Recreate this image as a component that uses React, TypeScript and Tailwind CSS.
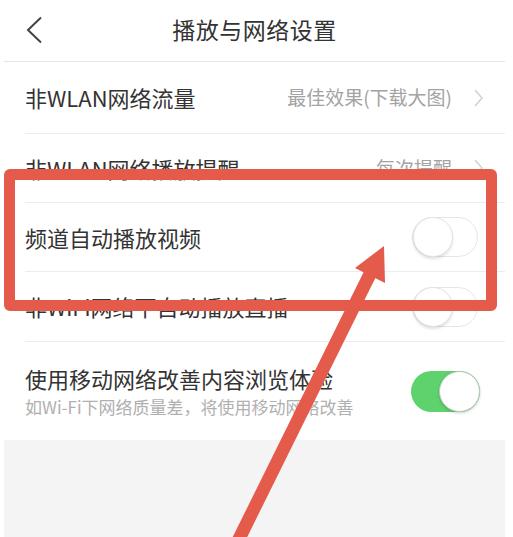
import React from "react";

const font = { fontFamily: '"Noto Sans CJK SC", "Noto Sans", sans-serif' };

function Chevron() {
  return (
    <svg width="9" height="18" viewBox="0 0 9 18" className="ml-[22px]">
      <path d="M1 1 L8 9 L1 17" fill="none" stroke="#cfcfcf" strokeWidth="1.4" />
    </svg>
  );
}

function Toggle({ on }: { on?: boolean }) {
  if (on) {
    return (
      <div className="w-[69px] h-[41px] rounded-full bg-[#5ed36d] flex items-center justify-end">
        <div className="w-[41px] h-[41px] rounded-full bg-white border border-[#b9c9bb] shadow-[0_1px_3px_rgba(0,0,0,0.2)]" />
      </div>
    );
  }
  return (
    <div className="w-[66px] h-[40px] rounded-full bg-white border border-[#e6e6e6] flex items-center">
      <div className="w-[40px] h-[40px] rounded-full bg-white border border-[#e3e3e3] shadow-[0_2px_3px_rgba(0,0,0,0.12)]" />
    </div>
  );
}

function Row({
  title,
  value,
  toggle,
  h,
}: {
  title: string;
  value?: string;
  toggle?: boolean;
  h: string;
}) {
  return (
    <div className="pl-[21px]">
      <div className={`${h} flex items-center ${toggle ? "pr-[27px]" : "pr-[22px]"} border-b border-[#ececec]`}>
        <span className="flex-1 text-[22px] text-[#333]">{title}</span>
        {value && <span className="text-[19px] text-[#a3a3a3]">{value}</span>}
        {value && <Chevron />}
        {toggle && <Toggle />}
      </div>
    </div>
  );
}

export default function App() {
  return (
    <div className="relative w-[513px] h-[537px] bg-white overflow-hidden" style={font}>
      <div className="ml-[4px] w-[501px] h-full flex flex-col">
        <div className="h-[62px] relative flex items-center justify-center border-b border-[#e5e5e5]">
          <svg width="17" height="28" viewBox="0 0 17 28" className="absolute left-[22px] top-[16px]">
            <path d="M15 1.5 L2 14 L15 26.5" fill="none" stroke="#444" strokeWidth="2" />
          </svg>
          <span className="text-[23px] text-[#333] tracking-[0.5px] -mt-[2px]">播放与网络设置</span>
        </div>
        <Row h="h-[72px]" title="非WLAN网络流量" value="最佳效果(下载大图)" />
        <Row h="h-[69px]" title="非WLAN网络播放提醒" value="每次提醒" />
        <Row h="h-[69px]" title="频道自动播放视频" toggle />
        <Row h="h-[70px]" title="非WiFi网络下自动播放直播" toggle />
        <div className="pl-[21px] pr-[25px] h-[98px] flex items-center">
          <div className="flex-1 flex flex-col">
            <span className="text-[22px] text-[#333] leading-[30px]">使用移动网络改善内容浏览体验</span>
            <span className="text-[17px] text-[#b0b0b0] leading-[24px] mt-[2px]">
              如Wi-Fi下网络质量差，将使用移动网络改善
            </span>
          </div>
          <Toggle on />
        </div>
        <div className="flex-1 bg-[#f4f4f4]" />
      </div>

      {/* annotation box */}
      <div className="absolute left-[4px] top-[169px] w-[493px] h-[142px] border-[11px] border-[#e45a4b] rounded-[6px]" />

      {/* annotation arrow */}
      <svg className="absolute inset-0" width="513" height="537" viewBox="0 0 513 537">
        <line x1="236" y1="545" x2="371" y2="272" stroke="#e45a4b" strokeWidth="13" />
        <polygon points="384,246 355,268 385,283" fill="#e45a4b" />
      </svg>
    </div>
  );
}
